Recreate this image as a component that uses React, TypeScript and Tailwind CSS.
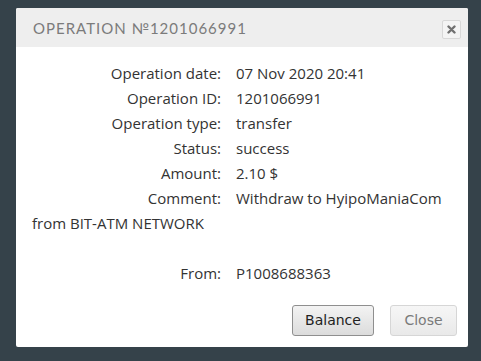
import React from "react";

const rows: { label: string; value: string }[] = [
    { label: "Operation date:", value: "07 Nov 2020 20:41" },
    { label: "Operation ID:", value: "1201066991" },
    { label: "Operation type:", value: "transfer" },
    { label: "Status:", value: "success" },
    { label: "Amount:", value: "2.10 $" },
];

const Row = ({ label, value }: { label: string; value: string }) => (
    <div className="flex h-[25px] items-center">
        <div className="w-[189px] shrink-0 text-right">{label}</div>
        <div className="pl-[15px]">{value}</div>
    </div>
);

export default function App() {
    return (
        <div className="w-[481px] h-[361px] bg-[#35424a] pt-[8px] pl-[16px]">
            <div className="w-[452px] h-[339px] bg-white rounded-[2px] flex flex-col overflow-hidden">
                {/* header */}
                <div className="h-[39px] bg-[#eeeeee] flex items-center justify-between pl-[17px] pr-[7px]">
                    <div className="text-[15px] tracking-[1px] text-[#7b7b7b] font-['Lato',sans-serif] pt-[1px]">
                        OPERATION №1201066991
                    </div>
                    <button className="w-[19px] h-[19px] mt-[3px] border border-[#d8d8d8] rounded-[2px] bg-[#f4f4f4] flex items-center justify-center">
                        <svg width="9" height="9" viewBox="0 0 9 9">
                            <path d="M1.5 1.5 L7.5 7.5 M7.5 1.5 L1.5 7.5" stroke="#707070" strokeWidth="2.4" strokeLinecap="round" />
                        </svg>
                    </button>
                </div>

                {/* body */}
                <div className="flex-1 px-[16px] pt-[14px] text-[15px] text-[#333] font-['Open_Sans',sans-serif]">
                    {rows.map((r) => (
                        <Row key={r.label} label={r.label} value={r.value} />
                    ))}
                    <Row label="Comment:" value="Withdraw to HyipoManiaCom" />
                    <div className="h-[25px] flex items-center">from BIT-ATM NETWORK</div>
                    <div className="h-[25px]" />
                    <Row label="From:" value="P1008688363" />
                </div>

                {/* footer */}
                <div className="flex justify-end gap-[16px] pr-[11px] pb-[11px] font-['DejaVu_Sans',sans-serif] text-[14px]">
                    <button className="w-[82px] h-[31px] rounded-[3px] border border-[#8f8f8f] bg-gradient-to-b from-[#f3f3f3] to-[#dcdcdc] text-[#222]">
                        Balance
                    </button>
                    <button className="w-[67px] h-[31px] rounded-[3px] border border-[#d6d6d6] bg-gradient-to-b from-[#f6f6f6] to-[#e9e9e9] text-[#7a7a7a]">
                        Close
                    </button>
                </div>
            </div>
        </div>
    );
}
